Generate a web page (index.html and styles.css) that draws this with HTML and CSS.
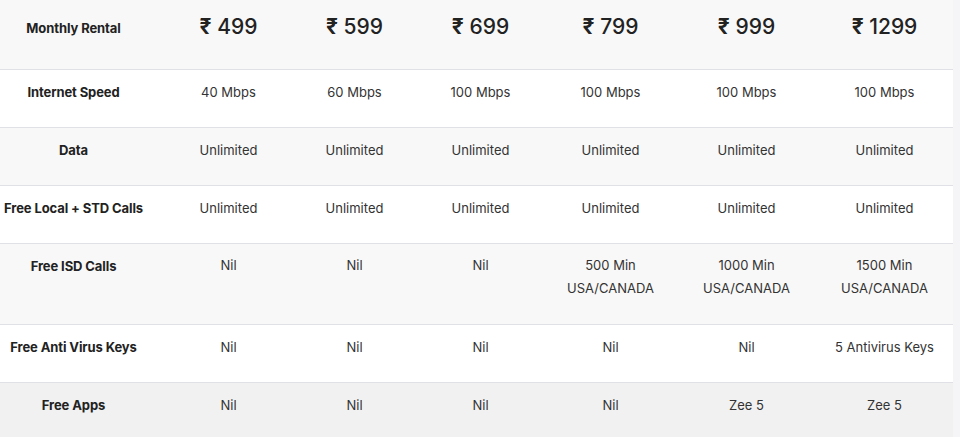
FILE: index.html
```html
<!DOCTYPE html>
<html lang="en">
<head>
<meta charset="utf-8">
<title>Broadband Plans</title>
<link rel="stylesheet" href="styles.css">
</head>
<body>
<table class="plans">
  <colgroup>
    <col class="c0"><col class="c1"><col class="c2"><col class="c3"><col class="c4"><col class="c5"><col class="c6">
  </colgroup>
  <tr class="row head">
    <th class="label">Monthly Rental</th>
    <th class="price"><span class="rs">₹</span> 499</th>
    <th class="price"><span class="rs">₹</span> 599</th>
    <th class="price"><span class="rs">₹</span> 699</th>
    <th class="price"><span class="rs">₹</span> 799</th>
    <th class="price"><span class="rs">₹</span> 999</th>
    <th class="price"><span class="rs">₹</span> 1299</th>
  </tr>
  <tr class="row white">
    <th class="label">Internet Speed</th>
    <td>40 Mbps</td><td>60 Mbps</td><td>100 Mbps</td><td>100 Mbps</td><td>100 Mbps</td><td>100 Mbps</td>
  </tr>
  <tr class="row grey">
    <th class="label">Data</th>
    <td>Unlimited</td><td>Unlimited</td><td>Unlimited</td><td>Unlimited</td><td>Unlimited</td><td>Unlimited</td>
  </tr>
  <tr class="row white">
    <th class="label">Free Local + STD Calls</th>
    <td>Unlimited</td><td>Unlimited</td><td>Unlimited</td><td>Unlimited</td><td>Unlimited</td><td>Unlimited</td>
  </tr>
  <tr class="row grey tall">
    <th class="label">Free ISD Calls</th>
    <td>Nil</td><td>Nil</td><td>Nil</td><td>500 Min<br>USA/CANADA</td><td>1000 Min<br>USA/CANADA</td><td>1500 Min<br>USA/CANADA</td>
  </tr>
  <tr class="row white">
    <th class="label">Free Anti Virus Keys</th>
    <td>Nil</td><td>Nil</td><td>Nil</td><td>Nil</td><td>Nil</td><td>5 Antivirus Keys</td>
  </tr>
  <tr class="row dark last">
    <th class="label">Free Apps</th>
    <td>Nil</td><td>Nil</td><td>Nil</td><td>Nil</td><td>Zee 5</td><td>Zee 5</td>
  </tr>
</table>
</body>
</html>
```
FILE: styles.css
```css
html, body {
  margin: 0;
  padding: 0;
}
body {
  background: #f5f5f7;
  font-family: Inter, "Open Sans", sans-serif;
  color: #333;
  height: 437px;
  overflow: hidden;
}
.plans {
  width: 953px;
  table-layout: fixed;
  border-collapse: separate;
  border-spacing: 0;
}
.c0 { width: 147px; }
.c1 { width: 163px; }
.c2 { width: 89px; }
.c3 { width: 163px; }
.c4 { width: 97px; }
.c5 { width: 175px; }
.c6 { width: 119px; }

.plans th, .plans td {
  padding: 10px 0 0;
  vertical-align: top;
  text-align: center;
  font-size: 13px;
  line-height: 24px;
  white-space: nowrap;
  border-bottom: 1px solid #e0e1e6;
}
.plans th:last-child, .plans td:last-child {
  padding-right: 18px;
}
.plans td {
  font-weight: 400;
  color: #333;
}
.plans .label {
  font-weight: 700;
  color: #222;
  letter-spacing: -0.1px;
}
.row { height: 58px; }
.row.head { height: 70px; }
.row.tall { height: 81px; }
.row.last { height: 60px; }
.row.last th, .row.last td { border-bottom: none; }
.tall td { line-height: 23px; }

.head .label { padding-top: 16px; }
.head .price {
  padding-top: 12px;
  font-size: 21px;
  line-height: 30px;
  font-weight: 500;
  color: #222;
}
.rs { font-weight: 700; }

.head, .grey { background: #f8f8f8; }
.white { background: #fff; }
.dark { background: #f1f1f1; }
```
